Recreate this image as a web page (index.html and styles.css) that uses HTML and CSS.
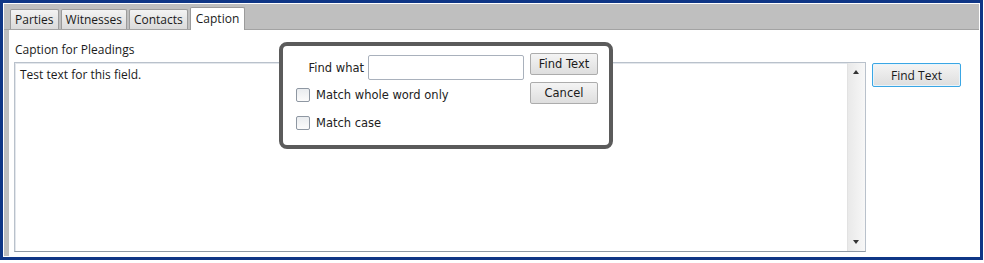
FILE: index.html
```html
<!DOCTYPE html>
<html>
<head>
    <title>Caption</title>
    <meta charset="utf-8">
    <link rel="stylesheet" href="styles.css">
</head>
<body>
<div class="frame">
    <div class="tabctl">
        <ul class="tabs">
            <li class="tab">Parties</li>
            <li class="tab">Witnesses</li>
            <li class="tab">Contacts</li>
            <li class="tab active">Caption</li>
        </ul>
        <div class="panel">
            <div class="caption-label">Caption for Pleadings</div>
            <div class="caption-row">
                <div class="textbox">
                    <div class="textbox-text">Test text for this field.</div>
                    <div class="vscroll">
                        <span class="arrow up"></span>
                        <span class="arrow down"></span>
                    </div>
                </div>
                <button class="btn btn-focus">Find Text</button>
            </div>
        </div>
    </div>
</div>

<!-- find dialog floats over the caption box -->
<div class="dialog">
    <div class="dialog-left">
        <div class="find-row">
            <label class="find-label">Find what</label>
            <input class="find-input" type="text">
        </div>
        <label class="check-row"><span class="check"></span>Match whole word only</label>
        <label class="check-row"><span class="check"></span>Match case</label>
    </div>
    <div class="dialog-right">
        <button class="btn btn-small">Find Text</button>
        <button class="btn btn-small">Cancel</button>
    </div>
</div>
</body>
</html>
```

FILE: styles.css
```css
* {
    margin: 0;
    padding: 0;
    box-sizing: border-box;
}

body {
    position: relative;
    width: 984px;
    height: 263px;
    background: #fff;
    font-family: "Open Sans", "Noto Sans", sans-serif;
    font-size: 12px;
    color: #1a1a1a;
}

ul {
    list-style: none;
}

.frame {
    width: 983px;
    height: 260px;
    border: 3px solid #0f3686;
    padding: 1px;
    background: #fff;
}

.tabctl {
    height: 252px;
    background: #bfbfbf;
    display: flex;
    flex-direction: column;
}

.tabs {
    height: 26px;
    display: flex;
    align-items: flex-end;
    gap: 2px;
    padding-left: 6px;
    border-bottom: 1px solid #a3a3a3;
}

.tab {
    height: 20px;
    line-height: 20px;
    padding: 0 4px;
    border: 1px solid #9b9b9b;
    border-bottom: none;
    border-radius: 2px 2px 0 0;
    background: linear-gradient(#f3f3f3, #dadada);
}

.tab.active {
    height: 23px;
    line-height: 22px;
    margin-bottom: -1px;
    background: #fff;
    padding: 0 5px;
}

.panel {
    flex: 1;
    margin-left: 5px;
    background: #fff;
    padding: 10px 12px 4px 5px;
    display: flex;
    flex-direction: column;
}

.caption-label {
    height: 22px;
    line-height: 20px;
    padding-left: 1px;
}

.caption-row {
    flex: 1;
    display: flex;
    align-items: flex-start;
    gap: 6px;
}

.textbox {
    width: 852px;
    height: 190px;
    border: 1px solid #b9c1cb;
    border-bottom-color: #8f99a5;
    box-shadow: inset 1px 1px 0 #e3e7ec;
    display: flex;
}

.textbox-text {
    flex: 1;
    padding: 3px 5px;
}

.vscroll {
    position: relative;
    width: 18px;
    border-left: 1px solid #e2e2e2;
    background: linear-gradient(to right, #e9e9e9, #f7f7f7);
}

.arrow {
    position: absolute;
    left: 5px;
    width: 0;
    height: 0;
    border-left: 3.5px solid transparent;
    border-right: 3.5px solid transparent;
}

.arrow.up {
    top: 7px;
    border-bottom: 4px solid #333;
}

.arrow.down {
    bottom: 7px;
    border-top: 4px solid #333;
}

.btn {
    font-family: "Open Sans", "Noto Sans", sans-serif;
    font-size: 12px;
    color: #1a1a1a;
    border: 1px solid #acacac;
    border-radius: 2px;
    background: linear-gradient(#f4f4f4, #dedede);
}

.btn-focus {
    width: 89px;
    height: 24px;
    margin-top: 1px;
    border-color: #3aa6e4;
    box-shadow: inset 0 0 0 1px #e8f4fb;
}

/* dialog */

.dialog {
    position: absolute;
    left: 279px;
    top: 42px;
    width: 334px;
    height: 107px;
    border: 4px solid #5b5b5b;
    border-radius: 8px;
    background: #fff;
    display: flex;
    padding: 7px 0 0 13px;
    font-family: "DejaVu Sans", sans-serif;
    font-size: 11.5px;
    color: #222;
}

.dialog-left {
    width: 228px;
}

.find-row {
    margin-top: 2px;
    height: 25px;
    display: flex;
    justify-content: flex-end;
    align-items: center;
    gap: 4px;
}

.find-input {
    width: 156px;
    height: 25px;
    border: 1px solid #a9b1bc;
    border-radius: 2px;
}

.check-row {
    height: 28px;
    display: flex;
    align-items: center;
    gap: 6px;
}

.find-row + .check-row {
    margin-top: 1px;
}

.check {
    width: 14px;
    height: 14px;
    border: 1px solid #8e97a2;
    border-radius: 2px;
    background: linear-gradient(#e9ecef, #fbfbfb);
}

.dialog-right {
    margin-left: 6px;
    display: flex;
    flex-direction: column;
    gap: 7px;
}

.btn-small {
    width: 68px;
    height: 22px;
    font-family: "DejaVu Sans", sans-serif;
    font-size: 11.5px;
}
```
